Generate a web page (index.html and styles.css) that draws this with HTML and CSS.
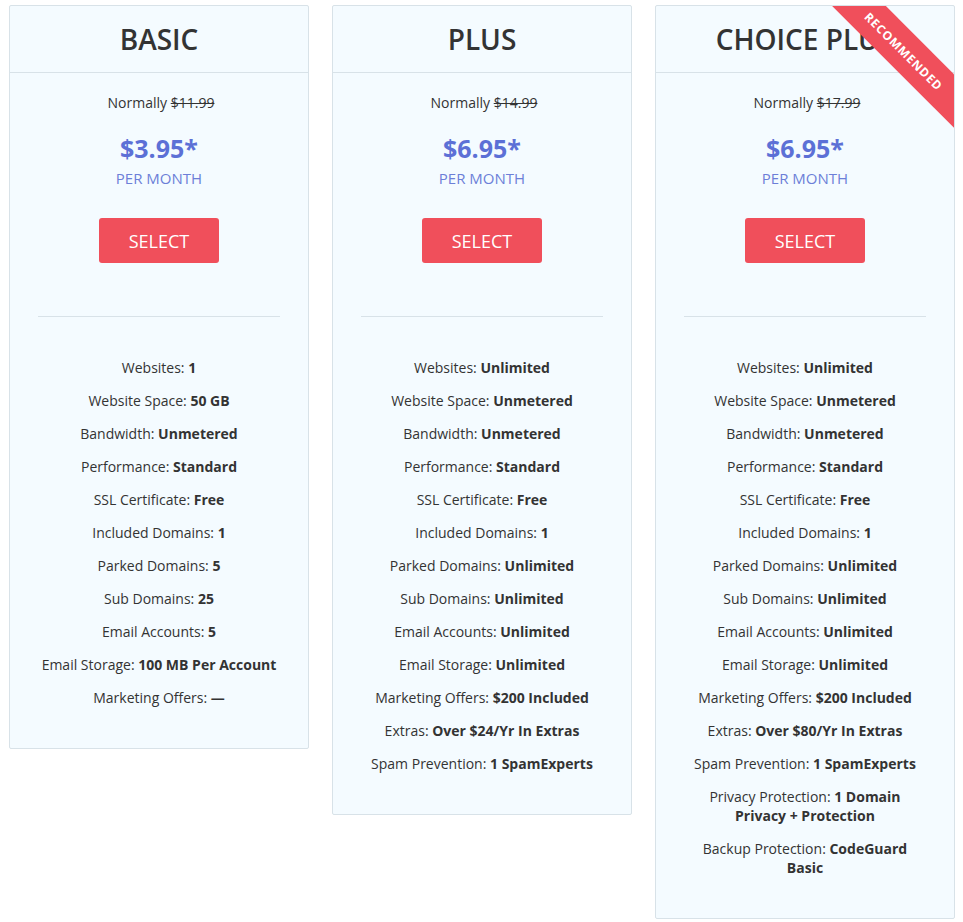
FILE: index.html
```html
<!DOCTYPE html>
<html>
<head>
<meta charset="utf-8">
<link rel="stylesheet" href="styles.css">
</head>
<body>
<div class="plans">
  <div class="card">
    <div class="card-head"><h2 class="title">BASIC</h2></div>
    <div class="card-body">
      <div class="normally">Normally <s>$11.99</s></div>
      <div class="price">$3.95*</div>
      <div class="per">PER MONTH</div>
      <a class="btn">SELECT</a>
      <hr class="divider">
      <ul class="features">
        <li>Websites: <b>1</b></li>
        <li>Website Space: <b>50 GB</b></li>
        <li>Bandwidth: <b>Unmetered</b></li>
        <li>Performance: <b>Standard</b></li>
        <li>SSL Certificate: <b>Free</b></li>
        <li>Included Domains: <b>1</b></li>
        <li>Parked Domains: <b>5</b></li>
        <li>Sub Domains: <b>25</b></li>
        <li>Email Accounts: <b>5</b></li>
        <li>Email Storage: <b>100 MB Per Account</b></li>
        <li>Marketing Offers: <b>—</b></li>
      </ul>
    </div>
  </div>
  <div class="card">
    <div class="card-head"><h2 class="title">PLUS</h2></div>
    <div class="card-body">
      <div class="normally">Normally <s>$14.99</s></div>
      <div class="price">$6.95*</div>
      <div class="per">PER MONTH</div>
      <a class="btn">SELECT</a>
      <hr class="divider">
      <ul class="features">
        <li>Websites: <b>Unlimited</b></li>
        <li>Website Space: <b>Unmetered</b></li>
        <li>Bandwidth: <b>Unmetered</b></li>
        <li>Performance: <b>Standard</b></li>
        <li>SSL Certificate: <b>Free</b></li>
        <li>Included Domains: <b>1</b></li>
        <li>Parked Domains: <b>Unlimited</b></li>
        <li>Sub Domains: <b>Unlimited</b></li>
        <li>Email Accounts: <b>Unlimited</b></li>
        <li>Email Storage: <b>Unlimited</b></li>
        <li>Marketing Offers: <b>$200 Included</b></li>
        <li>Extras: <b>Over $24/Yr In Extras</b></li>
        <li>Spam Prevention: <b>1 SpamExperts</b></li>
      </ul>
    </div>
  </div>
  <div class="card">
    <div class="ribbon">RECOMMENDED</div>
    <div class="card-head"><h2 class="title">CHOICE PLUS</h2></div>
    <div class="card-body">
      <div class="normally">Normally <s>$17.99</s></div>
      <div class="price">$6.95*</div>
      <div class="per">PER MONTH</div>
      <a class="btn">SELECT</a>
      <hr class="divider">
      <ul class="features">
        <li>Websites: <b>Unlimited</b></li>
        <li>Website Space: <b>Unmetered</b></li>
        <li>Bandwidth: <b>Unmetered</b></li>
        <li>Performance: <b>Standard</b></li>
        <li>SSL Certificate: <b>Free</b></li>
        <li>Included Domains: <b>1</b></li>
        <li>Parked Domains: <b>Unlimited</b></li>
        <li>Sub Domains: <b>Unlimited</b></li>
        <li>Email Accounts: <b>Unlimited</b></li>
        <li>Email Storage: <b>Unlimited</b></li>
        <li>Marketing Offers: <b>$200 Included</b></li>
        <li>Extras: <b>Over $80/Yr In Extras</b></li>
        <li>Spam Prevention: <b>1 SpamExperts</b></li>
        <li>Privacy Protection: <b>1 Domain Privacy + Protection</b></li>
        <li>Backup Protection: <b>CodeGuard Basic</b></li>
      </ul>
    </div>
  </div>
</div>
</body>
</html>
```

FILE: styles.css
```css
* { box-sizing: border-box; }
body {
  margin: 0;
  background: #ffffff;
  font-family: "Open Sans", "Liberation Sans", sans-serif;
  color: #333333;
}
.plans {
  display: flex;
  align-items: flex-start;
  gap: 23px;
  padding: 5px 0 0 9px;
}
.card {
  position: relative;
  overflow: hidden;
  width: 300px;
  background: #f4fbff;
  border: 1px solid #d8e2e8;
  border-radius: 2px;
}
.card-head {
  height: 67px;
  border-bottom: 1px solid #d8e2e8;
  display: flex;
  align-items: center;
  justify-content: center;
}
.title {
  margin: 0;
  font-size: 28px;
  font-weight: 600;
  letter-spacing: 0;
  color: #333333;
  line-height: 34px;
}
.card-body {
  padding: 20px 0 41px;
  display: flex;
  flex-direction: column;
  align-items: center;
}
.normally {
  font-size: 14px;
  line-height: 20px;
  padding-left: 4px;
}
.normally s { text-decoration-thickness: 1px; }
.price {
  margin-top: 20px;
  font-size: 25px;
  font-weight: 700;
  line-height: 30px;
  color: #5c70d6;
}
.per {
  margin-top: 5px;
  font-size: 15px;
  line-height: 20px;
  color: #6c7fd8;
}
.btn {
  margin-top: 30px;
  width: 120px;
  height: 45px;
  background: #f04f5b;
  border-radius: 3px;
  color: #ffffff;
  font-size: 18px;
  display: flex;
  align-items: center;
  justify-content: center;
}
.divider {
  margin: 53px 28px 0;
  align-self: stretch;
  border: 0;
  border-top: 1px solid #d8e2e8;
  height: 0;
}
.features {
  list-style: none;
  margin: 41px 0 0;
  padding: 0 30px;
  display: flex;
  flex-direction: column;
  gap: 14px;
  text-align: center;
  font-size: 14px;
  line-height: 19px;
}
.features b { font-weight: 700; color: #333; }
.ribbon {
  position: absolute;
  left: 138px;
  top: 26px;
  width: 220px;
  height: 38px;
  transform: rotate(45deg);
  background: #f04f5b;
  color: #ffffff;
  font-size: 12px;
  font-weight: 700;
  letter-spacing: 0.8px;
  display: flex;
  align-items: center;
  justify-content: center;
  z-index: 2;
}
```
